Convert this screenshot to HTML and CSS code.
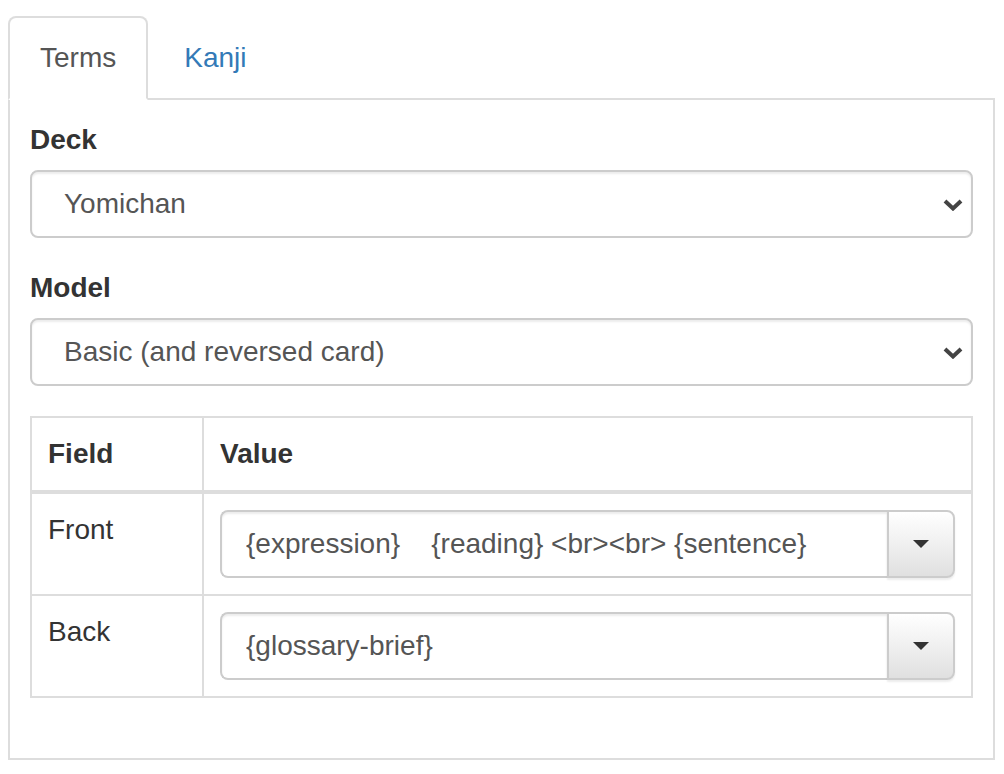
FILE: index.html
```html
<!DOCTYPE html>
<html>
<head>
<meta charset="utf-8">
<link rel="stylesheet" href="styles.css">
</head>
<body>
<div class="wrap">
  <ul class="tabs">
    <li class="tab active"><a>Terms</a></li>
    <li class="tab"><a class="link">Kanji</a></li>
  </ul>
  <div class="panel">
    <div class="form-group">
      <label class="lbl">Deck</label>
      <div class="select">
        <span class="select-text">Yomichan</span>
        <svg class="chev" width="20" height="12" viewBox="0 0 20 12"><path d="M2 2 L10 9.5 L18 2" fill="none" stroke="#444" stroke-width="4"/></svg>
      </div>
    </div>
    <div class="form-group">
      <label class="lbl">Model</label>
      <div class="select">
        <span class="select-text">Basic (and reversed card)</span>
        <svg class="chev" width="20" height="12" viewBox="0 0 20 12"><path d="M2 2 L10 9.5 L18 2" fill="none" stroke="#444" stroke-width="4"/></svg>
      </div>
    </div>
    <table class="fields">
      <thead>
        <tr><th class="col-field">Field</th><th>Value</th></tr>
      </thead>
      <tbody>
        <tr>
          <td>Front</td>
          <td>
            <div class="input-group">
              <input class="input" type="text" readonly value="{expression}    {reading} &lt;br&gt;&lt;br&gt; {sentence}">
              <div class="btn"><span class="caret"></span></div>
            </div>
          </td>
        </tr>
        <tr>
          <td>Back</td>
          <td>
            <div class="input-group">
              <input class="input" type="text" readonly value="{glossary-brief}">
              <div class="btn"><span class="caret"></span></div>
            </div>
          </td>
        </tr>
      </tbody>
    </table>
  </div>
</div>
</body>
</html>
```
FILE: styles.css
```css
* { box-sizing: border-box; }
html, body { background: #fff; }
body {
  margin: 16px 9px 0 8px;
  font-family: "Liberation Sans", Arial, sans-serif;
  font-size: 28px;
  line-height: 40px;
  color: #333;
}
.wrap { width: 987px; }
.tabs {
  list-style: none;
  margin: 0;
  padding: 0;
  display: flex;
  position: relative;
  z-index: 1;
}
.tab { margin-right: 4px; margin-bottom: -2px; }
.tab a {
  display: block;
  padding: 20px 30px;
  border: 2px solid transparent;
  border-radius: 8px 8px 0 0;
  color: #555;
}
.tab.active a {
  background: #fff;
  border-color: #ddd #ddd transparent #ddd;
}
.tab a.link { color: #337ab7; }
.panel {
  border: 2px solid #ddd;
  padding: 20px 20px 20px 20px;
}
.form-group { margin-bottom: 30px; }
.lbl {
  display: block;
  font-weight: bold;
  margin-bottom: 10px;
}
.select {
  height: 68px;
  border: 2px solid #ccc;
  border-radius: 8px;
  box-shadow: inset 0 2px 2px rgba(0,0,0,.075);
  display: flex;
  align-items: center;
  justify-content: space-between;
  padding: 0 8px 0 32px;
  color: #555;
}
.chev { display: block; margin-top: 2px; }
.fields {
  width: 100%;
  border-collapse: collapse;
  border: 2px solid #ddd;
  margin-bottom: 40px;
}
.fields th, .fields td {
  border: 2px solid #ddd;
  padding: 16px;
  text-align: left;
  vertical-align: top;
}
.fields th { border-bottom-width: 4px; font-weight: bold; }
.col-field { width: 172px; }
.input-group { display: flex; height: 68px; }
.input {
  flex: 1;
  min-width: 0;
  height: 68px;
  border: 2px solid #ccc;
  border-right: none;
  border-radius: 8px 0 0 8px;
  box-shadow: inset 0 2px 2px rgba(0,0,0,.075);
  padding: 0 24px;
  font-family: "Liberation Sans", Arial, sans-serif;
  font-size: 28px;
  color: #555;
  background: #fff;
  outline: none;
}
.btn {
  width: 68px;
  height: 68px;
  border: 2px solid #ccc;
  border-radius: 0 8px 8px 0;
  background: linear-gradient(to bottom, #fff 0, #e0e0e0 100%);
  box-shadow: inset 0 2px 0 rgba(255,255,255,.15), 0 2px 2px rgba(0,0,0,.075);
  display: flex;
  align-items: center;
  justify-content: center;
}
.caret {
  width: 0;
  height: 0;
  border-top: 8px solid #333;
  border-left: 8px solid transparent;
  border-right: 8px solid transparent;
}
```
